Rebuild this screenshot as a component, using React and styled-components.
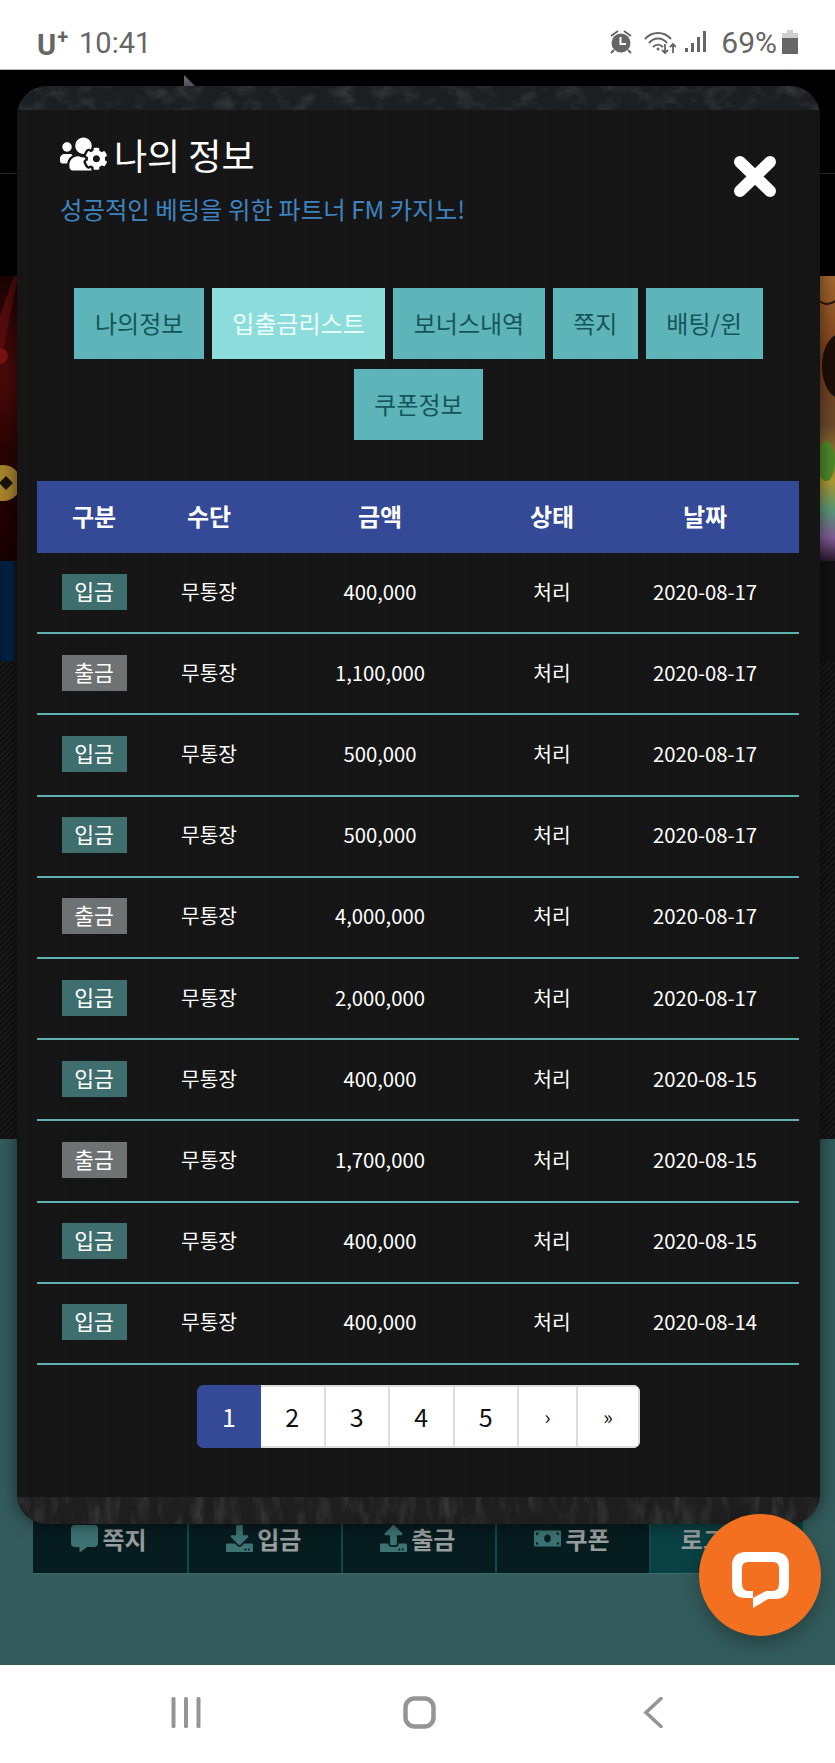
import React from "react";
import styled, { createGlobalStyle } from "styled-components";
import { FaUsersCog, FaCommentAlt, FaDownload, FaUpload, FaMoneyBill } from "react-icons/fa";

const FONT = `"Noto Sans CJK KR", "Noto Sans", sans-serif`;

const GlobalStyle = createGlobalStyle`
  html, body {
    margin: 0;
    padding: 0;
    background: #000;
  }
  body {
    font-family: ${FONT};
    overflow: hidden;
  }
`;

const Phone = styled.div`
  width: 835px;
  height: 1763px;
  display: flex;
  flex-direction: column;
  overflow: hidden;
`;

/* status bar */
const StatusBar = styled.div`
  height: 69px;
  flex: none;
  background: #fff;
  border-bottom: 1px solid #b9b9b9;
  color: #666;
  font-family: Roboto, sans-serif;
  display: flex;
  align-items: flex-start;
  justify-content: space-between;
  padding: 0 37px;
`;

const StatusLeft = styled.div`
  display: flex;
  align-items: flex-start;
  padding-top: 26px;
`;

const Carrier = styled.span`
  font-size: 29px;
  font-weight: 700;
  line-height: 36px;
  margin-top: 1px;
  sup {
    font-size: 20px;
    line-height: 0;
    vertical-align: 11px;
    margin-left: 1px;
  }
`;

const Clock = styled.span`
  font-size: 29px;
  line-height: 34px;
  margin-left: 11px;
`;

const StatusRight = styled.div`
  display: flex;
  align-items: flex-start;
  padding-top: 26px;
  svg {
    display: block;
    margin-top: 4px;
  }
`;

const Percent = styled.span`
  font-size: 30px;
  line-height: 34px;
  margin-left: 14px;
  margin-right: 5px;
`;

/* the page behind the dialog */
const Stage = styled.div`
  position: relative;
  flex: 1;
`;

const BackPage = styled.div`
  height: 100%;
  display: flex;
  flex-direction: column;
`;

const TopBand = styled.div`
  height: 206px;
  flex: none;
  box-sizing: border-box;
  padding-top: 103px;
  background: #000;
`;

const TopLine = styled.div`
  height: 1px;
  background: #2c2c2c;
`;

const BannerArt = styled.svg`
  display: block;
  flex: none;
  width: 835px;
  height: 285px;
`;

const DarkBand = styled.div`
  height: 578px;
  flex: none;
  display: flex;
  flex-direction: column;
  background: #121212;
`;

const BlueBand = styled.div`
  height: 100px;
  width: 100%;
  background: linear-gradient(90deg, #011b38 0, #02264c 12px, #121212 18px);
`;

const HatchBand = styled.div`
  flex: 1;
  background: repeating-linear-gradient(135deg, #101010 0 2px, #1a1a1a 2px 4px);
`;

const TealBand = styled.div`
  flex: 1;
  box-sizing: border-box;
  padding: 366px 32px 0 33px;
  background: #345c5d;
`;

const BackMenu = styled.div`
  height: 68px;
  display: grid;
  grid-template-columns: 156px 153.5px 154.5px 154px 152px;
  border-bottom: 1px solid #3d6a6a;
  background: #071c1f;
`;

const BackMenuItem = styled.div`
  display: flex;
  align-items: center;
  justify-content: center;
  gap: 4px;
  padding: 0 2px 2px 0;
  border-right: 2px solid #0f4a4a;
  background: ${(p) => (p.$on ? "#0a4244" : "transparent")};
  color: #999e9e;
  font-size: 24px;
  font-weight: 700;
  svg {
    color: #3d7373;
    font-size: 27px;
  }
`;

const LogoTip = styled.svg`
  position: absolute;
  left: 184px;
  top: 5px;
`;

/* dialog */
const Modal = styled.div`
  position: absolute;
  left: 17px;
  top: 16px;
  width: 803px;
  height: 1438px;
  display: flex;
  flex-direction: column;
  border-radius: 30px;
  overflow: hidden;
  box-shadow: 0 0 18px rgba(0, 0, 0, 0.55);
  background: repeating-linear-gradient(90deg, #151515 0 5px, #161616 5px 10px);
`;

const Stone = styled.svg`
  display: block;
  flex: none;
  width: 803px;
  height: ${(p) => p.$h}px;
  margin-top: ${(p) => (p.$bottom ? "auto" : "0")};
`;

const ModalHead = styled.div`
  display: flex;
  justify-content: space-between;
  align-items: flex-start;
  padding: 18px 43px 0 43px;
  height: 178px;
  box-sizing: border-box;
`;

const Title = styled.h2`
  margin: 0;
  display: flex;
  align-items: center;
  gap: 7px;
  color: #fff;
  font-size: 36px;
  font-weight: 400;
  line-height: 52px;
  svg {
    width: 47px;
    height: 38px;
  }
`;

const Sub = styled.p`
  margin: 11px 0 0;
  color: #3f84c2;
  font-size: 24.4px;
  line-height: 36px;
`;

const CloseIcon = styled.svg`
  display: block;
  margin-top: 27px;
`;

const Tabs = styled.div`
  display: flex;
  flex-wrap: wrap;
  justify-content: center;
  gap: 10px 8px;
  padding: 0 50px;
`;

const Tab = styled.div`
  height: 71px;
  box-sizing: border-box;
  padding: 0 20.5px 2px;
  display: flex;
  align-items: center;
  background: ${(p) => (p.$active ? "#8cdcdc" : "#5eb5b9")};
  color: ${(p) => (p.$active ? "#ecffff" : "#14555a")};
  font-size: 24px;
  white-space: nowrap;
`;

const Board = styled.div`
  margin: 41px 21px 0 20px;
`;

const HeadRow = styled.div`
  display: grid;
  grid-template-columns: 114px 116px 226px 118px 188px;
  height: 72px;
  box-sizing: border-box;
  padding-bottom: 3px;
  align-items: center;
  text-align: center;
  background: #344a97;
  color: #fff;
  font-size: 24px;
  font-weight: 700;
`;

const Row = styled.div`
  display: grid;
  grid-template-columns: 114px 116px 226px 118px 188px;
  height: 81.2px;
  box-sizing: border-box;
  padding-bottom: 4px;
  align-items: center;
  text-align: center;
  border-bottom: 2px solid #5fb0b1;
  color: #fff;
  font-size: 20.3px;
`;

const Badge = styled.span`
  display: inline-block;
  width: 65px;
  height: 36px;
  margin-top: 2px;
  line-height: 34px;
  background: ${(p) => (p.$out ? "#6f7272" : "#3f6e6e")};
  color: #fff;
  font-size: 21.5px;
`;

const Pager = styled.div`
  align-self: center;
  display: flex;
  margin-top: 20px;
  height: 63px;
  border-radius: 7px;
  overflow: hidden;
`;

const PageItem = styled.div`
  width: ${(p) => p.$w}px;
  box-sizing: border-box;
  display: flex;
  align-items: center;
  justify-content: center;
  background: ${(p) => (p.$active ? "#344a97" : "#fff")};
  color: ${(p) => (p.$active ? "#fff" : "#111")};
  border: 2px solid ${(p) => (p.$active ? "#344a97" : "#dcdcdc")};
  border-left-width: ${(p) => (p.$active ? 2 : 0)}px;
  font-size: ${(p) => (p.$arrow ? 20 : 25)}px;
`;

/* chat bubble */
const ChatButton = styled.div`
  position: absolute;
  left: 699px;
  top: 1444px;
  width: 122px;
  height: 122px;
  border-radius: 50%;
  background: #f47021;
  box-shadow: 0 8px 20px rgba(0, 0, 0, 0.3);
  display: flex;
  align-items: center;
  justify-content: center;
  svg {
    margin-top: 9px;
    margin-left: 1px;
  }
`;

/* android nav */
const NavBar = styled.div`
  height: 98px;
  flex: none;
  background: #fff;
  display: grid;
  grid-template-columns: 372px 91px 372px;
`;

const NavSlot = styled.div`
  display: flex;
  padding: 32px 0 0 ${(p) => p.$left}px;
  svg {
    flex: none;
  }
`;

const rows = [
  ["입금", "400,000", "2020-08-17"],
  ["출금", "1,100,000", "2020-08-17"],
  ["입금", "500,000", "2020-08-17"],
  ["입금", "500,000", "2020-08-17"],
  ["출금", "4,000,000", "2020-08-17"],
  ["입금", "2,000,000", "2020-08-17"],
  ["입금", "400,000", "2020-08-15"],
  ["출금", "1,700,000", "2020-08-15"],
  ["입금", "400,000", "2020-08-15"],
  ["입금", "400,000", "2020-08-14"],
];

const tabs = ["나의정보", "입출금리스트", "보너스내역", "쪽지", "배팅/윈", "쿠폰정보"];

const pages = [
  { label: "1", w: 64 },
  { label: "2", w: 64.5 },
  { label: "3", w: 64.5 },
  { label: "4", w: 64.5 },
  { label: "5", w: 64.5 },
  { label: "›", w: 59, arrow: true },
  { label: "»", w: 62, arrow: true },
];

const AlarmIcon = () => (
  <svg width="26" height="24" viewBox="0 0 26 24" fill="#666">
    <circle cx="13" cy="13" r="9.5" />
    <path d="M10 1 3 6M16 1l7 5M6 20l-3 3M20 20l3 3" stroke="#666" strokeWidth="2" fill="none" />
    <path d="M12.5 7v7H18" stroke="#fff" strokeWidth="2" fill="none" />
  </svg>
);

const WifiIcon = () => (
  <svg width="32" height="24" viewBox="0 0 32 24" fill="none" stroke="#666" strokeWidth="2" style={{ marginLeft: 10 }}>
    <path d="M1 9C8 1 20 1 27 9M5 13c5-6 13-6 18 0M9 17c3-3 7-3 10 0" />
    <circle cx="14" cy="19" r="1.5" fill="#666" stroke="none" />
    <path d="M21 14v9M18 20l3 3 3-3M29 23v-9M26 17l3-3 3 3" strokeWidth="1.8" />
  </svg>
);

const SignalIcon = () => (
  <svg width="22" height="24" viewBox="0 0 22 24" fill="#666" style={{ marginLeft: 9 }}>
    <rect x="0" y="18" width="3" height="4" />
    <rect x="6" y="13" width="3" height="9" />
    <rect x="12" y="7" width="3" height="15" />
    <rect x="18" y="1" width="3" height="21" />
  </svg>
);

const BatteryIcon = () => (
  <svg width="16" height="24" viewBox="0 0 16 24">
    <path d="M5 0h6v3h5v7H0V3h5z" fill="#cfcfcf" />
    <rect x="0" y="8" width="16" height="16" fill="#666" />
  </svg>
);

const CloseGlyph = () => (
  <CloseIcon width="44" height="43" viewBox="0 0 44 43">
    <path d="M7 7 37 36M37 7 7 36" stroke="#fff" strokeWidth="12" strokeLinecap="round" />
  </CloseIcon>
);

const StoneStrip = ({ id, h, bottom, tone, freq }) => (
  <Stone $h={h} $bottom={bottom} viewBox={`0 0 803 ${h}`} preserveAspectRatio="none">
    <filter id={id} x="0" y="0" width="100%" height="100%">
      <feTurbulence type="fractalNoise" baseFrequency={freq} numOctaves="4" seed="7" />
      <feColorMatrix values="0 0 0 0 0.62  0 0 0 0 0.64  0 0 0 0 0.66  1.6 0 0 0 -0.72" />
    </filter>
    <rect width="803" height={h} fill={tone} />
    <rect width="803" height={h} filter={`url(#${id})`} opacity="0.2" />
  </Stone>
);

const Banner = () => (
  <BannerArt viewBox="0 0 835 285">
    <defs>
      <linearGradient id="leftRed" x1="0" x2="0" y1="0" y2="1">
        <stop offset="0" stopColor="#1c0303" />
        <stop offset="0.35" stopColor="#4c0a08" />
        <stop offset="0.62" stopColor="#2a0303" />
        <stop offset="1" stopColor="#1a0000" />
      </linearGradient>
      <linearGradient id="rightFace" x1="0" x2="0" y1="0" y2="1">
        <stop offset="0" stopColor="#a4682e" />
        <stop offset="0.3" stopColor="#7a3f1c" />
        <stop offset="0.52" stopColor="#6b4a2c" />
        <stop offset="0.72" stopColor="#b09a30" />
        <stop offset="0.82" stopColor="#5c9a78" />
        <stop offset="0.92" stopColor="#7f5a96" />
        <stop offset="1" stopColor="#2a1a2c" />
      </linearGradient>
    </defs>
    <rect width="835" height="285" fill="#111" />
    <rect width="18" height="285" fill="url(#leftRed)" />
    <path d="M0 40 14 0h4L4 70 0 80z" fill="#6a1010" opacity="0.6" />
    <circle cx="0" cy="80" r="8" fill="#7a120e" />
    <circle cx="3" cy="207" r="18" fill="#a8842c" />
    <path d="M6 200l7 7-7 7-7-7z" fill="#1a1208" />
    <rect x="818" width="17" height="285" fill="url(#rightFace)" />
    <ellipse cx="840" cy="90" rx="18" ry="32" fill="#1e0f08" />
    <path d="M818 24c6 5 12 5 17 1" stroke="#2a170c" strokeWidth="2" fill="none" />
    <ellipse cx="826" cy="185" rx="9" ry="20" fill="#4f8a2a" />
  </BannerArt>
);

const LiveChatMark = () => (
  <svg width="57" height="56" viewBox="0 0 57 56">
    <path
      fill="#fff"
      fillRule="evenodd"
      d="M14 0H43Q57 0 57 14V33Q57 47 43 47H36L21 56V46H14Q0 46 0 33V14Q0 0 14 0ZM16 10Q10 10 10 16V31Q10 39 16 39H21V46L34 39H41Q47 39 47 31V16Q47 10 41 10Z"
    />
  </svg>
);

const App = () => (
  <Phone>
    <GlobalStyle />
    <StatusBar>
      <StatusLeft>
        <Carrier>
          U<sup>+</sup>
        </Carrier>
        <Clock>10:41</Clock>
      </StatusLeft>
      <StatusRight>
        <AlarmIcon />
        <WifiIcon />
        <SignalIcon />
        <Percent>69%</Percent>
        <BatteryIcon />
      </StatusRight>
    </StatusBar>

    <Stage>
      <BackPage>
        <TopBand>
          <TopLine />
        </TopBand>
        <Banner />
        <DarkBand>
          <BlueBand />
          <HatchBand />
        </DarkBand>
        <TealBand>
          <BackMenu>
            <BackMenuItem>
              <FaCommentAlt />
              쪽지
            </BackMenuItem>
            <BackMenuItem>
              <FaDownload />
              입금
            </BackMenuItem>
            <BackMenuItem>
              <FaUpload />
              출금
            </BackMenuItem>
            <BackMenuItem>
              <FaMoneyBill />
              쿠폰
            </BackMenuItem>
            <BackMenuItem $on>로그아웃</BackMenuItem>
          </BackMenu>
        </TealBand>
      </BackPage>

      <LogoTip width="12" height="12" viewBox="0 0 12 12">
        <path d="M0 0 12 12H0z" fill="#6d7378" />
      </LogoTip>

      <Modal>
        <StoneStrip id="stoneTop" h={24} tone="#1c1f22" freq="0.05 0.07" />
        <ModalHead>
          <div>
            <Title>
              <FaUsersCog />
              나의 정보
            </Title>
            <Sub>성공적인 베팅을 위한 파트너 FM 카지노!</Sub>
          </div>
          <CloseGlyph />
        </ModalHead>

        <Tabs>
          {tabs.map((t) => (
            <Tab key={t} $active={t === "입출금리스트"}>
              {t}
            </Tab>
          ))}
        </Tabs>

        <Board>
          <HeadRow>
            <div>구분</div>
            <div>수단</div>
            <div>금액</div>
            <div>상태</div>
            <div>날짜</div>
          </HeadRow>
          {rows.map(([kind, amount, date], i) => (
            <Row key={i}>
              <div>
                <Badge $out={kind === "출금"}>{kind}</Badge>
              </div>
              <div>무통장</div>
              <div>{amount}</div>
              <div>처리</div>
              <div>{date}</div>
            </Row>
          ))}
        </Board>

        <Pager>
          {pages.map((p) => (
            <PageItem key={p.label} $w={p.w} $active={p.label === "1"} $arrow={p.arrow}>
              {p.label}
            </PageItem>
          ))}
        </Pager>

        <StoneStrip id="stoneBottom" h={27} bottom tone="#1f1e1f" freq="0.09 0.03" />
      </Modal>

      <ChatButton>
        <LiveChatMark />
      </ChatButton>
    </Stage>

    <NavBar>
      <NavSlot $left={171}>
        <svg width="30" height="31" viewBox="0 0 30 31" fill="#959595">
          <rect x="0.5" y="0" width="4" height="31" rx="1.5" />
          <rect x="13" y="0" width="4" height="31" rx="1.5" />
          <rect x="25.5" y="0" width="4" height="31" rx="1.5" />
        </svg>
      </NavSlot>
      <NavSlot $left={31}>
        <svg width="33" height="33" viewBox="0 0 33 33" fill="none" style={{ marginTop: -1 }}>
          <rect x="2.5" y="2.5" width="28" height="28" rx="9" stroke="#959595" strokeWidth="4.5" />
        </svg>
      </NavSlot>
      <NavSlot $left={180}>
        <svg width="20" height="31" viewBox="0 0 20 31" fill="none">
          <path d="M18 1.5 3 15.5 18 29.5" stroke="#959595" strokeWidth="3.6" strokeLinecap="round" />
        </svg>
      </NavSlot>
    </NavBar>
  </Phone>
);

export default App;
